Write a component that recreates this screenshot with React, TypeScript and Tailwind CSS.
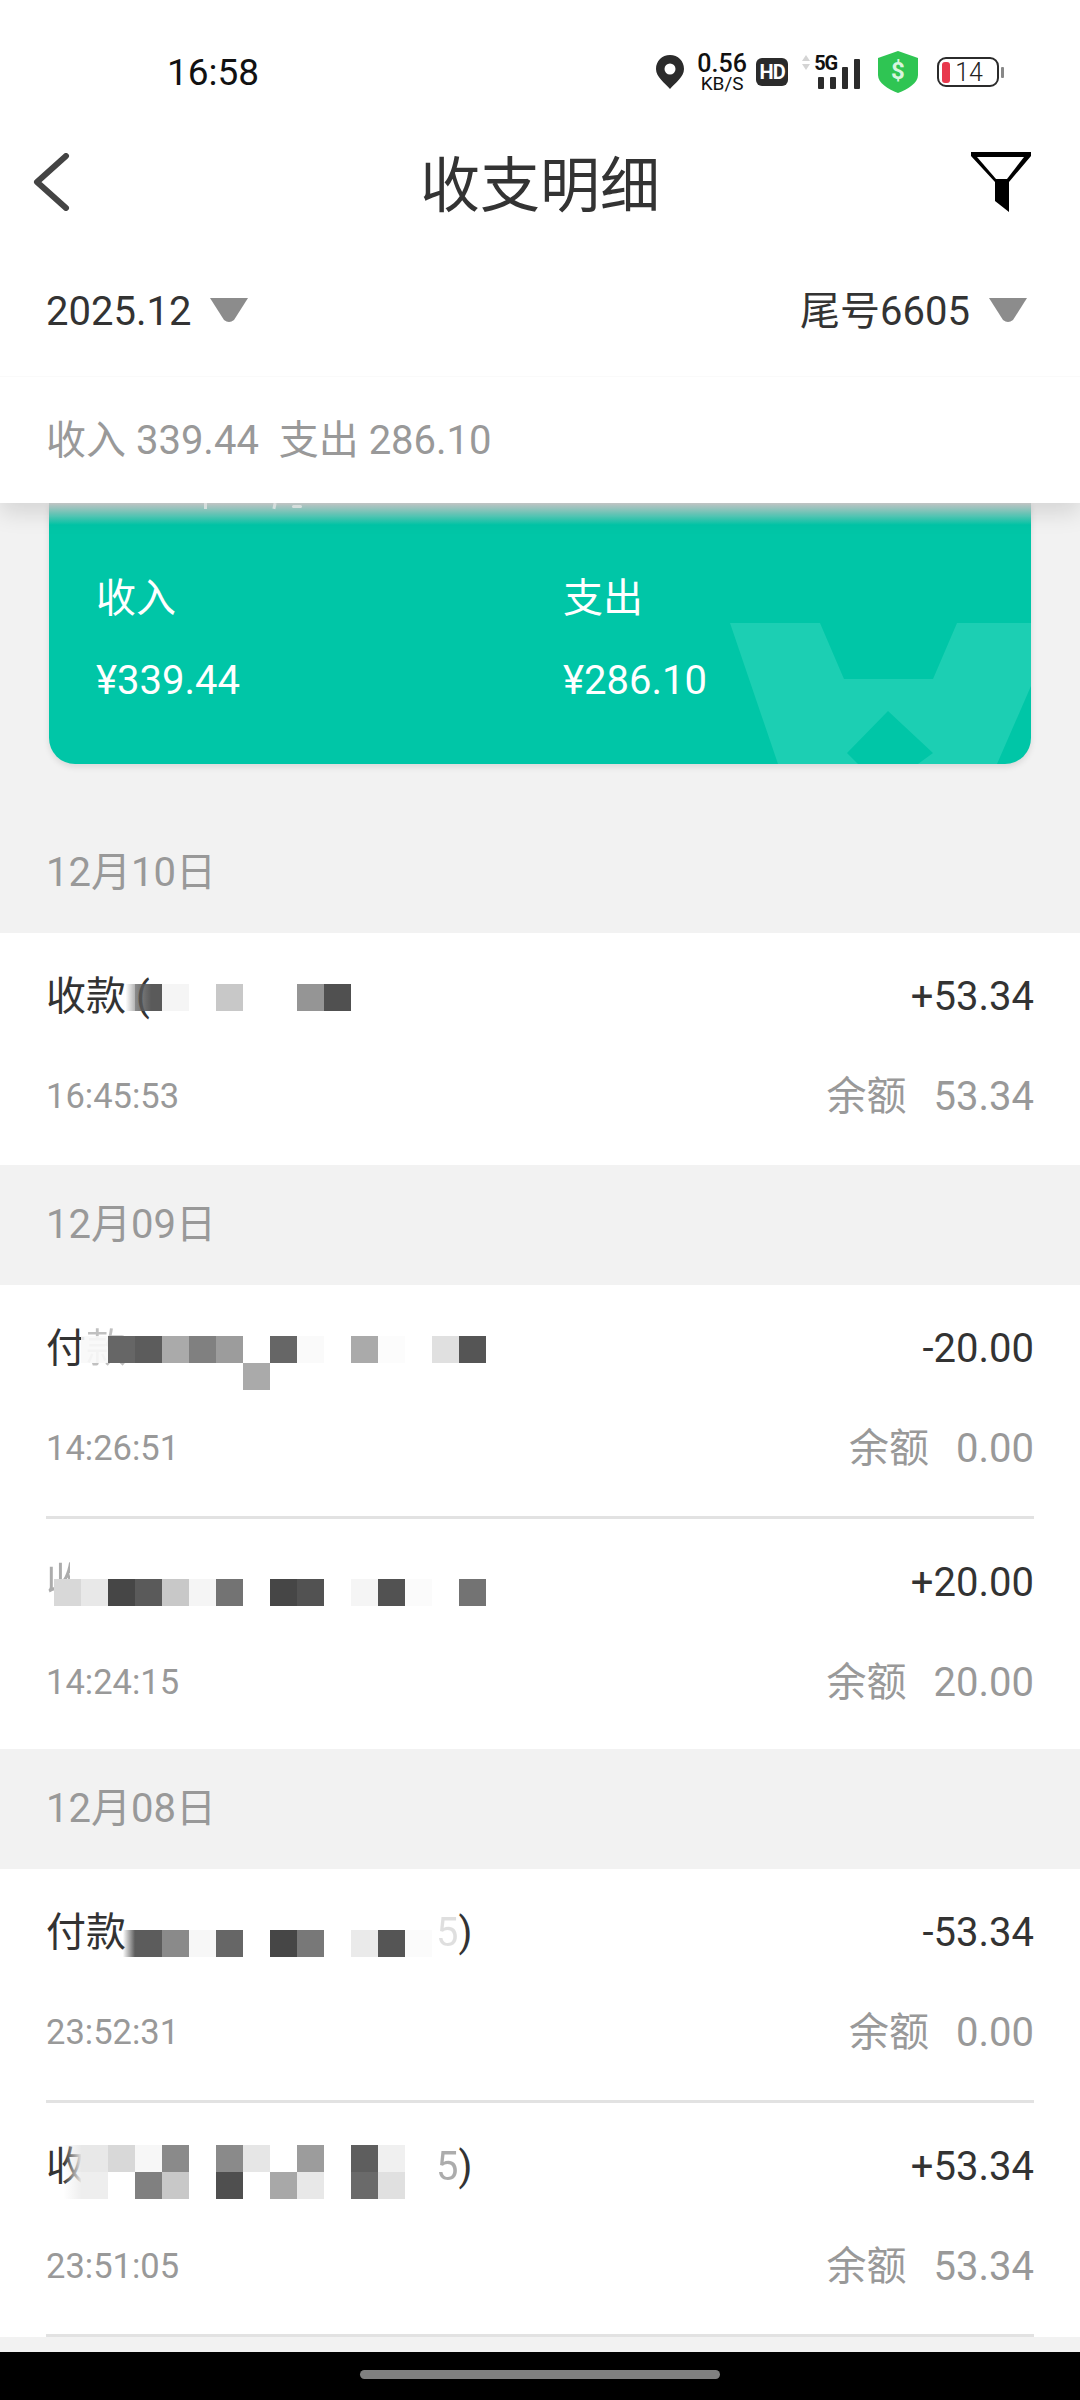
import React from "react";

type Cell = [number, number, string];

const Mosaic = ({ cells, top }: { cells: Cell[]; top: string }) => (
  <div className={`absolute left-[54px] grid grid-cols-[repeat(16,27px)] auto-rows-[27px] ${top}`}>
    {cells.map(([col, row, bg], i) => (
      <div key={i} style={{ gridColumnStart: col + 1, gridRowStart: row + 1, background: bg }} />
    ))}
  </div>
);

const Triangle = () => (
  <svg width="38" height="26" viewBox="0 0 38 26" className="mb-[4px] blur-[0.6px]">
    <path d="M0 1h38l-14 22q-5 4-10 0z" fill="#8c8c8c" />
  </svg>
);

const DateHeader = ({ text }: { text: string }) => (
  <div className="flex h-[120px] items-center px-[46px] text-[40px] text-[#999]">{text}</div>
);

const Row = ({
  title,
  amount,
  time,
  balance,
  height = "h-[232px]",
  divider,
  children,
}: {
  title: React.ReactNode;
  amount: string;
  time: string;
  balance: string;
  height?: string;
  divider?: boolean;
  children?: React.ReactNode;
}) => (
  <div className={`relative bg-white px-[46px] pt-[39px] ${height}`}>
    <div className="flex h-[50px] items-center justify-between text-[40px] text-[#333]">
      <span>{title}</span>
      <span>{amount}</span>
    </div>
    <div className="mt-[50px] flex h-[50px] items-center justify-between text-[#999]">
      <span className="text-[34.5px]">{time}</span>
      <span className="text-[40px]">
        余额<span className="ml-[27px]">{balance}</span>
      </span>
    </div>
    {divider && <div className="absolute bottom-0 left-[46px] right-[46px] h-[3px] bg-[#e2e2e2]" />}
    {children}
  </div>
);

const StatusBar = () => (
  <div className="flex h-[134px] items-center pl-[167px] pt-[10px] text-[#111]">
    <span className="text-[37px] leading-none">16:58</span>
    <div className="ml-[397px] flex items-center">
      <svg width="28" height="34" viewBox="0 0 28 34">
        <path d="M14 0C6 0 0 6 0 14c0 8 9 14 14 20 5-6 14-12 14-20C28 6 22 0 14 0z" fill="#2b2b2b" />
        <circle cx="14" cy="14" r="5.5" fill="#fff" />
      </svg>
      <div className="ml-[12px] flex w-[52px] flex-col items-center leading-none">
        <span className="text-[25px] font-medium leading-[22px]">0.56</span>
        <span className="text-[19px] leading-[17px]">KB/S</span>
      </div>
      <div className="ml-[8px] flex h-[28px] w-[32px] items-center justify-center rounded-[6px] bg-[#2b2b2b] text-[20px] font-bold tracking-[-1px] text-white">
        HD
      </div>
      <div className="relative ml-[13px] h-[34px] w-[59px]">
        <svg className="absolute left-0 top-0" width="10" height="15" viewBox="0 0 10 15">
          <path d="M5 0l4 6H1zM5 15l4-6H1z" fill="#d4d4d4" />
        </svg>
        <span className="absolute left-[13px] top-[-3px] text-[20px] font-bold leading-[22px] tracking-[-1px]">5G</span>
        <div className="absolute bottom-0 left-[17px] flex items-end gap-[6px]">
          <div className="h-[12px] w-[6px] rounded-[1px] bg-[#2b2b2b]" />
          <div className="h-[12px] w-[6px] rounded-[1px] bg-[#2b2b2b]" />
          <div className="h-[22px] w-[6px] rounded-[1px] bg-[#2b2b2b]" />
          <div className="h-[30px] w-[6px] rounded-[1px] bg-[#2b2b2b]" />
        </div>
      </div>
      <svg className="ml-[18px]" width="40" height="42" viewBox="0 0 40 42">
        <path d="M20 0l20 7v17c0 8-10 14-20 18C10 38 0 32 0 24V7z" fill="#2fc553" />
        <text x="20" y="28" textAnchor="middle" fontSize="24" fontWeight="700" fill="#d8f5df" fontFamily="Roboto">
          $
        </text>
      </svg>
      <div className="relative ml-[19px] flex h-[30px] w-[62px] items-center rounded-[9px] border-2 border-[#2b2b2b]">
        <div className="ml-[3px] h-[21px] w-[8px] rounded-[3px] bg-[#e8394d]" />
        <span className="ml-[5px] text-[25px] font-light leading-none text-[#222]">14</span>
        <div className="absolute right-[-7px] top-[8px] h-[11px] w-[3px] rounded-[1px] bg-[#888]" />
      </div>
    </div>
  </div>
);

const NavBar = () => (
  <div className="relative flex h-[112px] items-center justify-center pb-[6px]">
    <svg className="absolute left-[32px] top-[19px]" width="38" height="58" viewBox="0 0 38 58">
      <path d="M34 3L5 29l29 26" fill="none" stroke="#444" strokeWidth="6" strokeLinecap="round" strokeLinejoin="round" />
    </svg>
    <span className="text-[60px] leading-none text-[#333]">收支明细</span>
    <svg className="absolute left-[970px] top-[17px]" width="62" height="62" viewBox="0 0 62 62">
      <path d="M1 1h60v4L39 31v30L25 50V31L1 5z" fill="#000" />
      <path d="M7 6h47L37 28H26z" fill="#fff" />
    </svg>
  </div>
);

export default function App() {
  return (
    <div className="flex h-[2400px] w-[1080px] flex-col overflow-hidden bg-[#f2f2f2] font-[Roboto,'Noto_Sans_CJK_SC',sans-serif]">
      <div className="relative z-10 bg-white shadow-[0_10px_22px_rgba(0,0,0,0.12)]">
        <StatusBar />
        <NavBar />
        <div className="flex h-[130px] items-center justify-between px-[46px] pt-[2px] text-[40px] text-[#333]">
          <div className="flex items-center gap-[19px]">
            <span>2025.12</span>
            <Triangle />
          </div>
          <div className="flex items-center gap-[19px] pr-[7px]">
            <span>尾号6605</span>
            <Triangle />
          </div>
        </div>
        <div className="flex h-[127px] items-center border-t border-[#fafafa] px-[46px] pt-[2px] text-[40px] text-[#999]">
          收入 339.44&nbsp;&nbsp;支出 286.10
        </div>
      </div>

      <div className="px-[49px]">
        <div className="relative h-[261px] overflow-hidden rounded-b-[26px] bg-[#00c6a7] shadow-[0_3px_6px_rgba(0,0,0,0.1)]">
          <div className="absolute inset-x-0 top-0 h-[22px] bg-gradient-to-b from-[#d6d9d9] to-transparent" />
          {/* bits of the line hidden under the header */}
          <div className="absolute left-[155px] top-0 h-[6px] w-[3px] bg-white/70" />
          <div className="absolute left-[224px] top-0 h-[6px] w-[3px] rotate-12 bg-white/70" />
          <div className="absolute left-[243px] top-[2px] h-[3px] w-[10px] rounded-full bg-white/70" />
          <svg className="absolute left-0 top-0" width="982" height="261" viewBox="0 0 982 261">
            <path
              fillRule="evenodd"
              d="M681 120h90l24 56h89l24-56h74v63l-34 78H729zM839 208l-41 42 11 11h60l15-11z"
              fill="#1ccfb3"
            />
          </svg>
          <div className="absolute left-[47px] top-[71px] flex w-[800px] text-[40px] text-white">
            <div className="w-[467px]">
              <div className="leading-[50px]">收入</div>
              <div className="mt-[32px] leading-[50px]">¥339.44</div>
            </div>
            <div>
              <div className="leading-[50px]">支出</div>
              <div className="mt-[32px] leading-[50px]">¥286.10</div>
            </div>
          </div>
        </div>
      </div>

      <div className="mt-[49px] flex-1 overflow-hidden">
        <DateHeader text="12月10日" />
        <Row title="收款 (" amount="+53.34" time="16:45:53" balance="53.34">
          <Mosaic
            top="top-[51px]"
            cells={[
              [2, 0, "linear-gradient(to right, transparent 65%, rgba(90,90,90,.45))"],
              [3, 0, "linear-gradient(to right, rgba(90,90,90,.7), #5a5a5a 60%)"],
              [4, 0, "#f5f5f5"],
              [6, 0, "#c8c8c8"],
              [9, 0, "#959595"],
              [10, 0, "#505050"],
            ]}
          />
        </Row>
        <DateHeader text="12月09日" />
        <Row
          title={
            <>
              付<span className="opacity-30">款</span>
            </>
          }
          amount="-20.00"
          time="14:26:51"
          balance="0.00"
          height="h-[234px]"
          divider
        >
          <Mosaic
            top="top-[51px]"
            cells={[
              [1, 0, "rgba(248,248,248,.9)"],
              [2, 0, "#666666"],
              [3, 0, "#5c5c5c"],
              [4, 0, "#aaaaaa"],
              [5, 0, "#808080"],
              [6, 0, "#9c9c9c"],
              [8, 0, "#666666"],
              [9, 0, "#fafafa"],
              [11, 0, "#aaaaaa"],
              [12, 0, "#fcfcfc"],
              [14, 0, "#e0e0e0"],
              [15, 0, "#555555"],
              [7, 1, "#aaaaaa"],
            ]}
          />
        </Row>
        <Row
          title={<span className="opacity-40">收</span>}
          amount="+20.00"
          time="14:24:15"
          balance="20.00"
          height="h-[230px]"
        >
          <div className="absolute left-[70px] top-[38px] h-[24px] w-[24px] bg-white" />
          <Mosaic
            top="top-[60px]"
            cells={[
              [0, 0, "#d8d8d8"],
              [1, 0, "#e8e8e8"],
              [2, 0, "#464646"],
              [3, 0, "#5a5a5a"],
              [4, 0, "#c8c8c8"],
              [5, 0, "#f5f5f5"],
              [6, 0, "#737373"],
              [8, 0, "#464646"],
              [9, 0, "#525252"],
              [11, 0, "#f5f5f5"],
              [12, 0, "#525252"],
              [13, 0, "#fbfbfb"],
              [15, 0, "#737373"],
            ]}
          />
        </Row>
        <DateHeader text="12月08日" />
        <Row title="付款" amount="-53.34" time="23:52:31" balance="0.00" height="h-[234px]" divider>
          <span className="absolute left-[436px] top-[39px] text-[40px] leading-[50px] text-[#333]">
            <span className="opacity-15">5</span>)
          </span>
          <Mosaic
            top="top-[61px]"
            cells={[
              [2, 0, "linear-gradient(to right, transparent 55%, #5c5c5c)"],
              [3, 0, "#5c5c5c"],
              [4, 0, "#8a8a8a"],
              [5, 0, "#f7f7f7"],
              [6, 0, "#666666"],
              [8, 0, "#464646"],
              [9, 0, "#787878"],
              [11, 0, "#eaeaea"],
              [12, 0, "#555555"],
              [13, 0, "#fbfbfb"],
            ]}
          />
        </Row>
        <Row title="收" amount="+53.34" time="23:51:05" balance="53.34" height="h-[234px]" divider>
          <span className="absolute left-[436px] top-[39px] text-[40px] leading-[50px] text-[#333]">
            <span className="opacity-40">5</span>)
          </span>
          <Mosaic
            top="top-[42px]"
            cells={[
              [0, 0, "linear-gradient(to right, transparent 35%, rgba(232,232,232,.95))"],
              [1, 0, "#e8e8e8"],
              [2, 0, "#d8d8d8"],
              [3, 0, "#f7f7f7"],
              [4, 0, "#8a8a8a"],
              [6, 0, "#8a8a8a"],
              [7, 0, "#e6e6e6"],
              [9, 0, "#9c9c9c"],
              [11, 0, "#5e5e5e"],
              [12, 0, "#f0f0f0"],
              [0, 1, "linear-gradient(to right, transparent 35%, rgba(238,238,238,.95))"],
              [1, 1, "#eeeeee"],
              [3, 1, "#808080"],
              [4, 1, "#c8c8c8"],
              [6, 1, "#4f4f4f"],
              [8, 1, "#a8a8a8"],
              [9, 1, "#e8e8e8"],
              [11, 1, "#6a6a6a"],
              [12, 1, "#e0e0e0"],
            ]}
          />
        </Row>
      </div>

      <div className="flex h-[48px] shrink-0 items-start justify-center bg-black pt-[18px]">
        <div className="h-[9px] w-[360px] rounded-full bg-[#808080]" />
      </div>
    </div>
  );
}
